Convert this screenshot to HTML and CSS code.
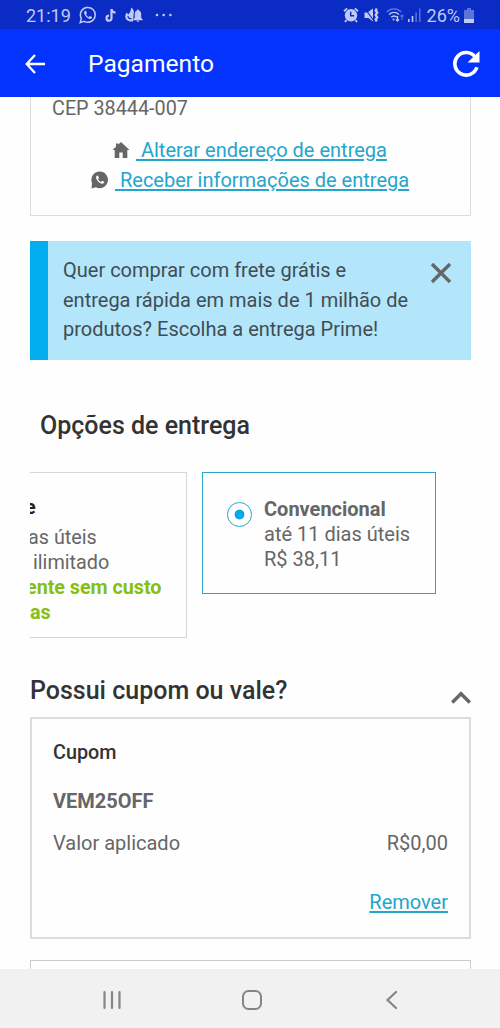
FILE: index.html
```html
<!DOCTYPE html>
<html lang="pt-BR">

<head>
    <meta charset="UTF-8">
    <title>Pagamento</title>
    <link rel="stylesheet" href="styles.css">
</head>

<body>
    <div class="status-bar">
        <span class="clock">21:19</span>
        <svg class="st-whats" width="18" height="18" viewBox="0 0 18 18">
            <path d="M1.2 16.6l1.1-4.2a7.4 7.4 0 1 1 2.9 2.9z" fill="none" stroke="currentColor" stroke-width="1.5" />
            <path d="M6.3 4.8c-1.700.8-1.500 2.600-.3 4.400 1.300 2 3.100 3.400 4.900 3.700 1.200.1 2.200-.7 2.200-1.900l-2.200-1.100-1.100 1.100c-1.300-.5-2.200-1.500-2.700-2.600l.8-1-.8-2.300z" fill="currentColor" />
        </svg>
        <svg class="st-tiktok" width="12" height="15" viewBox="0 0 12 15">
            <path d="M6.500 1v9.300a2.500 2.500 0 1 1-2.500-2.600M6.500 1.200c.3 2 1.800 3.400 4 3.500" fill="none" stroke="currentColor" stroke-width="2.200" />
        </svg>
        <svg class="st-fire" width="18" height="16" viewBox="0 0 18 16">
            <path d="M6 .5c2.500 1.500 3.500 4 2.700 6.200L8 14.500H5C2 14 .2 12 .3 9.500.4 7.800 1 6.500 1.800 5.500l1.400 2C5.200 5.500 6.200 3 6 .5z" fill="currentColor" />
            <path d="M3 9c0 2 1.500 3.200 3.500 2.500" fill="none" stroke="#0a2cc4" stroke-width="1.200" />
            <path d="M12.800 2.500c.7 0 1.100.5 1.100 1.100 1.600.6 2.300 2 2.300 3.800v3.400l1.500 1.800v.7H8.200v-.7l1.500-1.800V7.400c0-1.800.7-3.200 2.200-3.800 0-.6.3-1.100.9-1.100zM11.500 13.800h2.800c-.3 1.500-2.500 1.500-2.800 0z" fill="currentColor" />
        </svg>
        <svg class="st-dots" width="18" height="4" viewBox="0 0 18 4" fill="currentColor">
            <circle cx="2" cy="2" r="1.300" />
            <circle cx="8.700" cy="2" r="1.300" />
            <circle cx="15.400" cy="2" r="1.300" />
        </svg>

        <div class="status-right">
            <svg width="16" height="16" viewBox="0 0 16 16">
                <path d="M1 4.300L4.200 1.400M11.800 1.400L15 4.300M3.500 13.200L2 15M12.500 13.200L14 15" stroke="currentColor" stroke-width="1.900" />
                <circle cx="8" cy="8.300" r="6.200" fill="currentColor" />
                <path d="M7.700 4.800v4h3.400" fill="none" stroke="#0a2cc4" stroke-width="1.500" />
            </svg>
            <svg class="st-mute" width="16" height="16" viewBox="0 0 16 16">
                <path d="M.500 5.500h3L9 1.500v13L4.500 11h-4z" fill="currentColor" />
                <path d="M1 1.500l9 12.500" stroke="#0a2cc4" stroke-width="1.200" />
                <path d="M12.700 1.500l-1 2 1.500 2-1.500 2.500 1.500 2.500-1.500 2 1 2" fill="none" stroke="currentColor" stroke-width="2.400" />
            </svg>
            <svg class="st-wifi" width="18" height="16" viewBox="0 0 18 16" fill="none" stroke="currentColor" stroke-width="1.400">
                <path d="M.800 5C4.500.800 11.500.800 15.200 5" opacity=".5" />
                <path d="M3 7.600c2.700-3 7.300-3 10 0M5.300 10.200c1.500-1.700 3.900-1.700 5.400 0" />
                <circle cx="7.500" cy="12.500" r="1" fill="currentColor" stroke="none" />
                <path d="M11.500 9v5M10 12.500l1.500 1.500 1.500-1.500" />
                <path d="M16 8v5M14.500 9.500L16 8l1.500 1.500" opacity=".4" />
            </svg>
            <svg class="st-signal" width="13" height="14" viewBox="0 0 13 14" fill="currentColor">
                <path d="M0 11h1.600v3H0zM3.700 8h1.600v6H3.700z" />
                <path d="M7.300 4.500h1.600V14H7.300zM11 .500h1.600V14H11z" opacity=".4" />
            </svg>
            <span class="percent">26%</span>
            <svg class="st-battery" width="10" height="15" viewBox="0 0 10 15" fill="currentColor">
                <path d="M0 2h3V0h4v2h3v9H0z" opacity=".45" />
                <path d="M0 11h10v4H0z" />
            </svg>
        </div>
    </div>

    <header class="top-bar">
        <svg class="back" width="20" height="20" viewBox="0 0 20 20" fill="none" stroke="#fff" stroke-width="2.300">
            <path d="M10 1L1.700 10l8.300 9M1.700 10H20" />
        </svg>
        <h1>Pagamento</h1>
        <svg class="reload" width="28" height="28" viewBox="0 0 28 28">
            <path d="M23.200 7A11.300 11.300 0 1 0 24.900 17.300" fill="none" stroke="#fff" stroke-width="3.600" />
            <path d="M27.500 1v11.500H15.500z" fill="#fff" />
        </svg>
    </header>

    <main>
        <section class="address">
            <p class="cep">CEP 38444-007</p>
            <p class="address-link">
                <svg class="home" width="18" height="18" viewBox="0 0 18 18" fill="#666">
                    <path d="M9 1l8.500 8h-2.200v8h-4.600v-5.500H7.300V17H2.700V9H.500L4 5.700V2.500h2.300v1z" />
                </svg>
                <a href="#">&nbsp;Alterar endereço de entrega</a>
            </p>
            <p class="address-link whats-link">
                <svg class="whats" width="18" height="18" viewBox="0 0 18 18">
                    <path d="M.500 17.500l.5-5.500a8.300 8.300 0 1 1 4 4.300z" fill="#666" />
                    <path d="M6.300 4.500c-1.700.8-1.500 2.600-.3 4.400 1.300 2 3.100 3.500 4.900 3.800 1.200.1 2.400-.7 2.400-1.900L11 9.700l-1.100 1.200C8.600 10.400 7.600 9.400 7 8.200l.9-1.100-.8-2.400z" fill="#fff" />
                </svg>
                <a href="#">&nbsp;Receber informações de entrega</a>
            </p>
        </section>

        <section class="banner">
            <p>Quer comprar com frete grátis e<br>entrega rápida em mais de 1 milhão de<br>produtos? Escolha a entrega Prime!</p>
            <svg class="close" width="22" height="22" viewBox="0 0 22 22" stroke="#666" stroke-width="3.300">
                <path d="M2 2l18 18M20 2L2 20" />
            </svg>
        </section>

        <h2 class="title-delivery">Opções de entrega</h2>

        <section class="options">
            <div class="option prime">
                <strong class="name">e</strong>
                <span class="days">as úteis</span>
                <span class="free">ilimitado</span>
                <b class="green">ente sem custo</b>
                <b class="green last">as</b>
            </div>
            <div class="option selected">
                <span class="radio"></span>
                <div>
                    <strong>Convencional</strong>
                    <span>até 11 dias úteis</span>
                    <span>R$ 38,11</span>
                </div>
            </div>
        </section>

        <div class="coupon-head">
            <h2>Possui cupom ou vale?</h2>
            <svg class="chevron" width="20" height="13" viewBox="0 0 20 13" fill="none" stroke="#666" stroke-width="3.400">
                <path d="M1.200 11.500L10 2.700l8.800 8.800" />
            </svg>
        </div>

        <section class="coupon">
            <h3>Cupom</h3>
            <strong class="code">VEM25OFF</strong>
            <div class="value">
                <span>Valor aplicado</span>
                <span class="price">R$0,00</span>
            </div>
            <a class="remove" href="#">Remover</a>
        </section>

        <section class="voucher"></section>
    </main>

    <nav class="nav-bar">
        <svg width="20" height="20" viewBox="0 0 20 20" stroke="#858585" stroke-width="2.200" stroke-linecap="round">
            <path d="M2.500 2v16M10 2v16M17.500 2v16" />
        </svg>
        <svg width="20" height="20" viewBox="0 0 20 20" fill="none" stroke="#858585" stroke-width="2">
            <rect x="1" y="1" width="18" height="18" rx="5.500" />
        </svg>
        <svg width="20" height="20" viewBox="0 0 20 20" fill="none" stroke="#858585" stroke-width="2.200" stroke-linecap="round">
            <path d="M14 2L5.500 10l8.500 8" />
        </svg>
    </nav>
</body>

</html>
```
FILE: styles.css
```css
* {
    box-sizing: border-box;
    margin: 0;
    padding: 0;
}

body {
    display: flex;
    flex-direction: column;
    width: 500px;
    height: 1028px;
    overflow: hidden;
    background: #fefefe;
    color: #666;
    font-family: Roboto, "Liberation Sans", sans-serif;
    font-size: 20px;
    white-space: nowrap;
}

svg {
    display: block;
    flex: none;
}

a {
    color: #24a5cc;
    text-decoration: underline;
    text-decoration-thickness: 1.5px;
    text-underline-offset: 2px;
}

/* barra de status */
.status-bar {
    display: flex;
    align-items: center;
    height: 29px;
    padding: 1px 26px 0;
    background: #0a2cc4;
    color: #c0caf4;
    font-size: 18px;
}

.clock {
    width: 53px;
}

.st-tiktok {
    margin-left: 8px;
}

.st-fire {
    margin-left: 8px;
}

.st-dots {
    margin-left: 12px;
}

.status-right {
    display: flex;
    align-items: center;
    margin-left: auto;
}

.st-mute {
    margin-left: 5px;
}

.st-wifi {
    margin-left: 6px;
}

.st-signal {
    margin-left: 4px;
}

.percent {
    margin-left: 6px;
}

.st-battery {
    margin-left: 4px;
}

/* cabeçalho */
.top-bar {
    display: flex;
    align-items: center;
    height: 68px;
    padding: 1px 20px 0 25px;
    background: #0433ff;
    color: #fff;
}

.top-bar h1 {
    margin-left: 43px;
    font-size: 24.600px;
    font-weight: 400;
}

.reload {
    margin-left: auto;
}

main {
    flex: 1;
    min-height: 0;
    overflow: hidden;
    padding: 0 29px 0 30px;
}

/* endereço */
.address {
    height: 119px;
    border: 1.5px solid #ddd;
    border-top: none;
}

.cep {
    margin-left: 21px;
    height: 38px;
    font-size: 19.8px;
    line-height: 24px;
}

.address-link {
    display: flex;
    align-items: center;
    height: 30px;
    margin-left: 81px;
}

.address-link a {
    margin-left: 6px;
}

.whats-link {
    margin-left: 60px;
}

/* aviso do Prime */
.banner {
    display: flex;
    justify-content: space-between;
    height: 119px;
    margin-top: 25px;
    padding: 15px 19px 0 15px;
    border-left: 18px solid #03aeef;
    background: #b3e6fa;
    color: #3f4d55;
    line-height: 29.5px;
}

.close {
    margin-top: 6px;
}

h2 {
    color: #333;
    font-size: 25px;
    font-weight: 500;
    line-height: 32px;
}

.title-delivery {
    margin: 50px 0 30px 10px;
}

/* opções de entrega */
.options {
    display: flex;
    align-items: flex-start;
    gap: 15px;
    overflow: hidden;
}

.option {
    border: 1px solid #d5d5d5;
    line-height: 25px;
}

.option span,
.option strong,
.option b {
    display: block;
}

.prime {
    width: 157px;
    height: 166px;
    padding-top: 22px;
    border-left: none;
    font-size: 19.8px;
}

.prime .name {
    margin: 0 0 5px -5px;
    color: #222;
}

.days {
    margin-left: -2px;
}

.free {
    margin-left: 3px;
}

.green {
    margin-left: -4px;
    color: #86bf13;
    letter-spacing: -.05px;
}

.green.last {
    margin-left: 0;
}

.selected {
    display: flex;
    width: 234px;
    height: 122px;
    padding: 24px 0 0 24px;
    border: 1.500px solid #2ba6cb;
}

.radio {
    width: 25px;
    height: 25px;
    margin: 5px 12px 0 0;
    border: 1.500px solid #1fa8d4;
    border-radius: 50%;
    background: radial-gradient(circle, #03a9ec 4.500px, #fff 5.300px);
}

/* cupom */
.coupon-head {
    display: flex;
    justify-content: space-between;
    margin-top: 37px;
    height: 42px;
}

.chevron {
    margin-top: 16px;
}

.coupon {
    display: flex;
    flex-direction: column;
    height: 222px;
    padding: 21px 21px 0;
    border: 2px solid #ddd;
    line-height: 26px;
}

.coupon h3 {
    color: #333;
    font-size: 19.8px;
    font-weight: 500;
}

.code {
    margin-top: 22px;
}

.value {
    display: flex;
    justify-content: space-between;
    margin-top: 16px;
}

.remove {
    align-self: flex-end;
    margin-top: 33px;
}

.voucher {
    height: 40px;
    margin-top: 21px;
    border: 1.500px solid #ccc;
}

/* navegação do Android */
.nav-bar {
    display: flex;
    justify-content: space-between;
    align-items: center;
    height: 59px;
    padding: 2px 98px 0 102px;
    background: #f1f1f1;
}
```
